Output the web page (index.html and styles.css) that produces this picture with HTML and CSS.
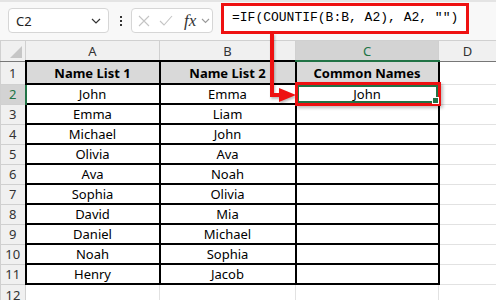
FILE: index.html
```html
<!DOCTYPE html>
<html lang="en">
<head>
    <meta charset="UTF-8">
    <title>Common Names - Excel</title>
    <link rel="stylesheet" href="styles.css">
</head>
<body>
    <div class="formula-bar">
        <div class="name-box">
            <span>C2</span>
            <svg width="10" height="6" viewBox="0 0 10 6"><path d="M1 1l4 4 4-4" fill="none" stroke="#333" stroke-width="1.2"/></svg>
        </div>
        <div class="dots"><i></i><i></i><i></i></div>
        <div class="fx-box">
            <svg width="12" height="12" viewBox="0 0 12 12"><path d="M1 1l10 10M11 1L1 11" stroke="#c4c4c4" stroke-width="1.1"/></svg>
            <svg width="14" height="11" viewBox="0 0 14 11"><path d="M1 6l4 4 8-9" fill="none" stroke="#c4c4c4" stroke-width="1.1"/></svg>
            <span class="fx">fx</span>
            <svg width="9" height="6" viewBox="0 0 9 6"><path d="M1 1l3.5 3.5L8 1" fill="none" stroke="#9a9a9a" stroke-width="1.1"/></svg>
        </div>
        <div class="formula-input">=IF(COUNTIF(B:B, A2), A2, "")</div>
    </div>

    <table class="sheet">
        <colgroup>
            <col class="col-rowhead">
            <col class="col-a">
            <col class="col-b">
            <col class="col-c">
            <col class="col-d">
        </colgroup>
        <thead>
            <tr>
                <th class="corner"><span class="corner-mark"></span></th>
                <th>A</th>
                <th>B</th>
                <th class="sel-col">C</th>
                <th>D</th>
            </tr>
        </thead>
        <tbody>
            <tr class="title-row"><th>1</th><td class="t">Name List 1</td><td class="t">Name List 2</td><td class="t">Common Names</td><td></td></tr>
            <tr><th class="sel-row">2</th><td class="b">John</td><td class="b">Emma</td><td class="b active">John</td><td></td></tr>
            <tr><th>3</th><td class="b">Emma</td><td class="b">Liam</td><td class="b"></td><td></td></tr>
            <tr><th>4</th><td class="b">Michael</td><td class="b">John</td><td class="b"></td><td></td></tr>
            <tr><th>5</th><td class="b">Olivia</td><td class="b">Ava</td><td class="b"></td><td></td></tr>
            <tr><th>6</th><td class="b">Ava</td><td class="b">Noah</td><td class="b"></td><td></td></tr>
            <tr><th>7</th><td class="b">Sophia</td><td class="b">Olivia</td><td class="b"></td><td></td></tr>
            <tr><th>8</th><td class="b">David</td><td class="b">Mia</td><td class="b"></td><td></td></tr>
            <tr><th>9</th><td class="b">Daniel</td><td class="b">Michael</td><td class="b"></td><td></td></tr>
            <tr><th>10</th><td class="b">Noah</td><td class="b">Sophia</td><td class="b"></td><td></td></tr>
            <tr><th>11</th><td class="b">Henry</td><td class="b">Jacob</td><td class="b"></td><td></td></tr>
            <tr class="last-row"><th>12</th><td></td><td></td><td></td><td></td></tr>
        </tbody>
    </table>

    <!-- annotation: arrow from formula to result cell -->
    <svg class="arrow" width="496" height="300" viewBox="0 0 496 300">
        <path d="M272 33V95H282" fill="none" stroke="#ee1111" stroke-width="4"/>
        <polygon points="279,88 296,95 279,102" fill="#ee1111"/>
    </svg>
    <div class="callout"></div>
</body>
</html>
```

FILE: styles.css
```css
body {
    margin: 0;
    width: 496px;
    height: 300px;
    overflow: hidden;
    position: relative;
    background: #fff;
    font-family: "Noto Sans", "Open Sans", sans-serif;
}

.formula-bar {
    height: 40px;
    box-sizing: border-box;
    border-top: 2px solid #e4e4e4;
    background: #f8f8f8;
    display: flex;
    align-items: flex-start;
}

.name-box {
    margin: 6px 0 0 8px;
    width: 101px;
    height: 25px;
    box-sizing: border-box;
    border: 1px solid #d6d6d6;
    border-radius: 4px;
    background: #fff;
    display: flex;
    align-items: center;
    justify-content: space-between;
    padding: 0 7px 0 7px;
    font-size: 13px;
    color: #222;
}

.dots {
    margin: 14px 0 0 11px;
    display: flex;
    flex-direction: column;
    gap: 2px;
}

.dots i {
    display: block;
    width: 2px;
    height: 2px;
    background: #333;
}

.fx-box {
    margin: 6px 0 0 9px;
    width: 82px;
    height: 25px;
    box-sizing: border-box;
    border: 1px solid #d6d6d6;
    border-radius: 4px;
    background: #fff;
    display: flex;
    align-items: center;
    gap: 9px;
    padding-left: 6px;
}

.fx {
    font-family: "Liberation Serif", serif;
    font-style: italic;
    font-size: 17px;
    color: #333;
    margin-left: 2px;
    margin-right: -4px;
}

.formula-input {
    margin: 1px 0 0 8px;
    width: 248px;
    height: 31px;
    box-sizing: border-box;
    border: 3px solid #ee1111;
    background: #fff;
    padding-left: 8px;
    font-family: "Liberation Mono", monospace;
    font-size: 13px;
    line-height: 24px;
    color: #000;
    white-space: nowrap;
}

.sheet {
    table-layout: fixed;
    border-collapse: collapse;
    width: 496px;
    font-size: 13px;
    line-height: 16px;
}

.col-rowhead { width: 25px; }
.col-a { width: 134px; }
.col-b { width: 136px; }
.col-c { width: 143px; }
.col-d { width: 58px; }

.sheet th,
.sheet td {
    padding: 0;
    height: 18px;
    border: 1px solid #e2e2e2;
    text-align: center;
    white-space: nowrap;
    overflow: hidden;
}

.sheet thead th {
    height: 19px;
    background: #f0f0f0;
    font-weight: normal;
    color: #333;
    border-color: #d0d0d0;
    border-bottom: 1px solid #777;
}

.sheet tbody th {
    background: #f0f0f0;
    font-weight: normal;
    color: #333;
    border-color: #d0d0d0;
}

.corner {
    position: relative;
}

.corner-mark {
    position: absolute;
    right: 3px;
    bottom: 3px;
    width: 0;
    height: 0;
    border-left: 12px solid transparent;
    border-bottom: 12px solid #c6c6c6;
}

.sheet thead th.sel-col {
    background: #d3d3d3;
    color: #217346;
    border-bottom: 2px solid #217346;
}

.sheet tbody th.sel-row {
    background: #d3d3d3;
    color: #217346;
    border-right: 2px solid #217346;
}

.title-row th,
.title-row td {
    height: 21px;
}

.last-row th,
.last-row td {
    vertical-align: top;
    padding-top: 2px;
}

.sheet td.t {
    background: #d9d9d9;
    font-weight: bold;
    border: 2px solid #000;
}

.sheet td.b {
    border: 2px solid #000;
}

.sheet td.active {
    outline: 2px solid #217346;
    outline-offset: -3px;
}

.arrow {
    position: absolute;
    left: 0;
    top: 0;
    pointer-events: none;
    filter: drop-shadow(1px 2px 1px rgba(0, 0, 0, 0.25));
}

.callout {
    position: absolute;
    left: 295px;
    top: 82px;
    width: 146px;
    height: 24px;
    box-sizing: border-box;
    border: 3px solid #ee1111;
    box-shadow: 2px 2px 3px rgba(0, 0, 0, 0.25);
}

.callout::after {
    content: "";
    position: absolute;
    right: -1px;
    bottom: -1px;
    width: 5px;
    height: 5px;
    background: #217346;
    border: 1px solid #fff;
}
```
